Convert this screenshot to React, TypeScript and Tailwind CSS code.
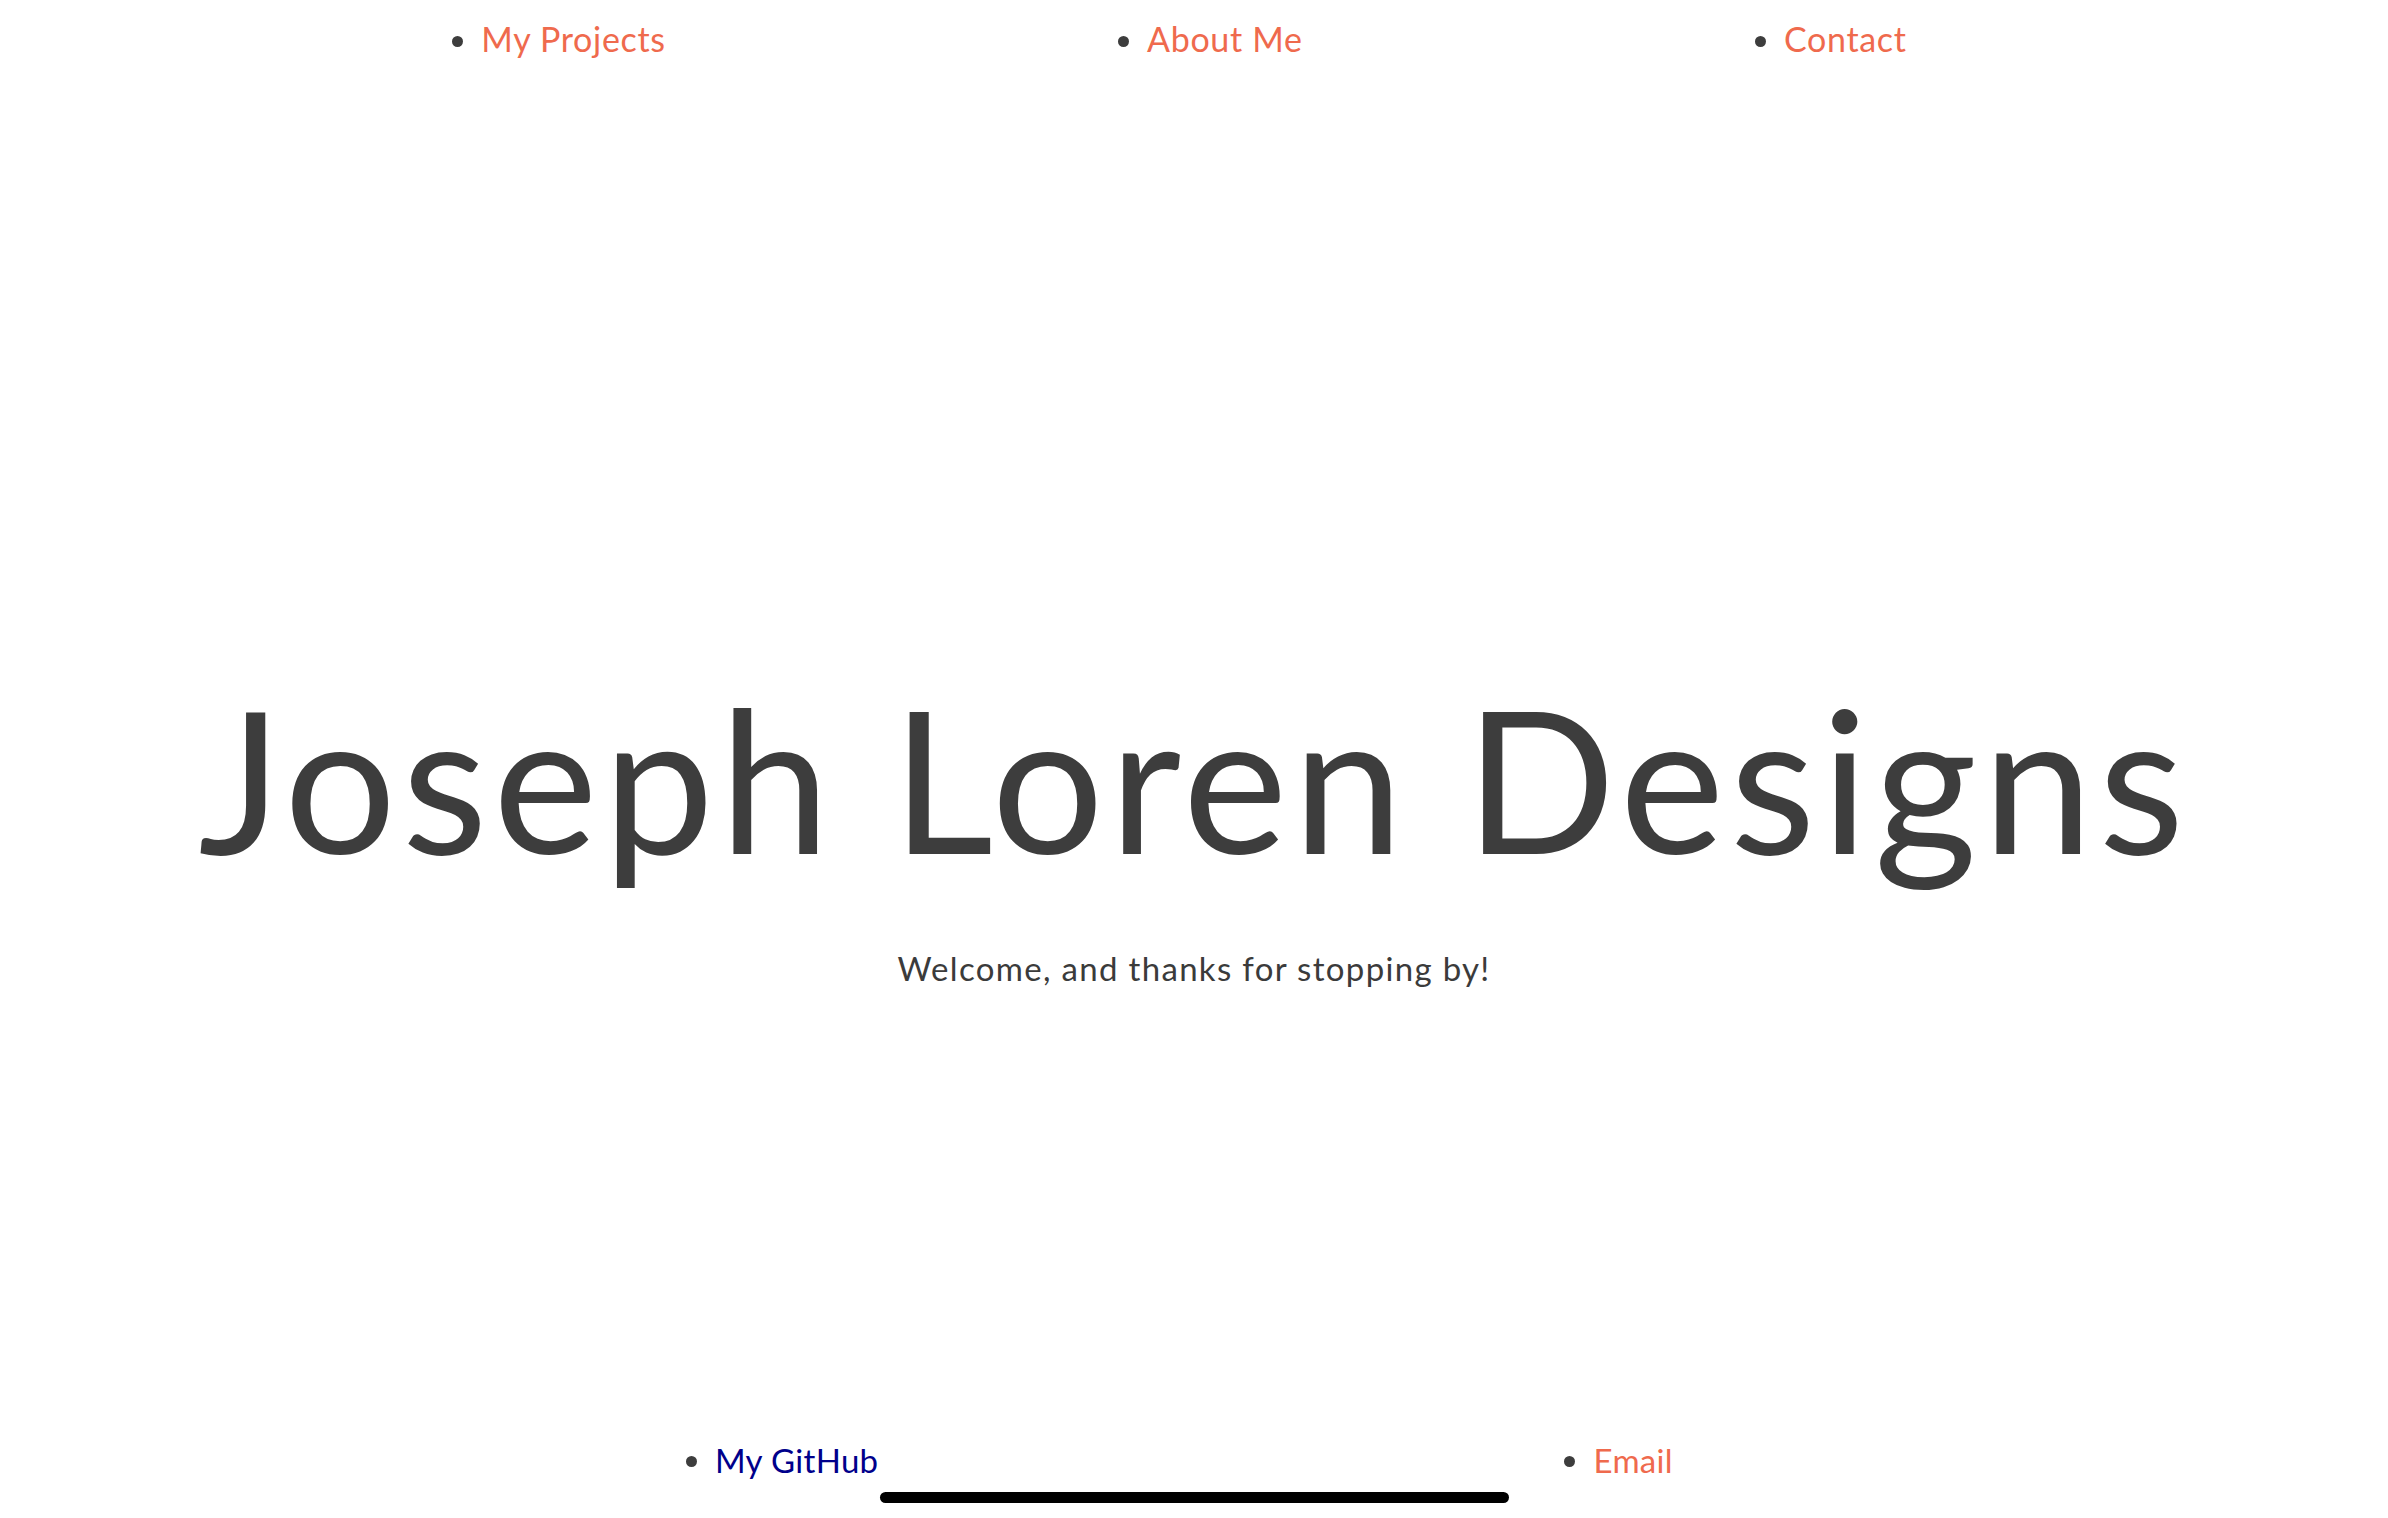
export default function App() {
  const font = { fontFamily: 'Lato, "Noto Sans", sans-serif' };
  return (
    <div className="relative h-[1518px] w-full overflow-hidden bg-white" style={font}>
      <nav>
        <ul className="flex list-disc justify-evenly pt-[22px] text-[34px] leading-none tracking-[0.02em] text-[#ef6a4d] marker:text-[#3d3d3d]">
          <li><a href="#projects">My Projects</a></li>
          <li><a href="#about">About Me</a></li>
          <li><a href="#contact">Contact</a></li>
        </ul>
      </nav>

      <main className="flex flex-col items-center">
        <h1 className="mt-[623px] text-[198px] leading-none tracking-[5.5px] text-[#3d3d3d]">Joseph Loren Designs</h1>
        <p className="mt-[75px] text-[33px] leading-none tracking-[0.04em] text-[#3b3b3b]">
          Welcome, and thanks for stopping by!
        </p>
      </main>

      <footer className="absolute bottom-0 left-0 w-full">
        <ul className="flex list-disc justify-evenly text-[33px] leading-none tracking-[0.01em] marker:text-[#3d3d3d]">
          <li><a href="#github" className="text-[#00008b]">My GitHub</a></li>
          <li><a href="#email" className="text-[#ef6a4d]">Email</a></li>
        </ul>
        <div className="flex justify-center pb-[15px] pt-[15px]">
          <div className="h-[11px] w-[629px] rounded-full bg-black" />
        </div>
      </footer>
    </div>
  );
}
